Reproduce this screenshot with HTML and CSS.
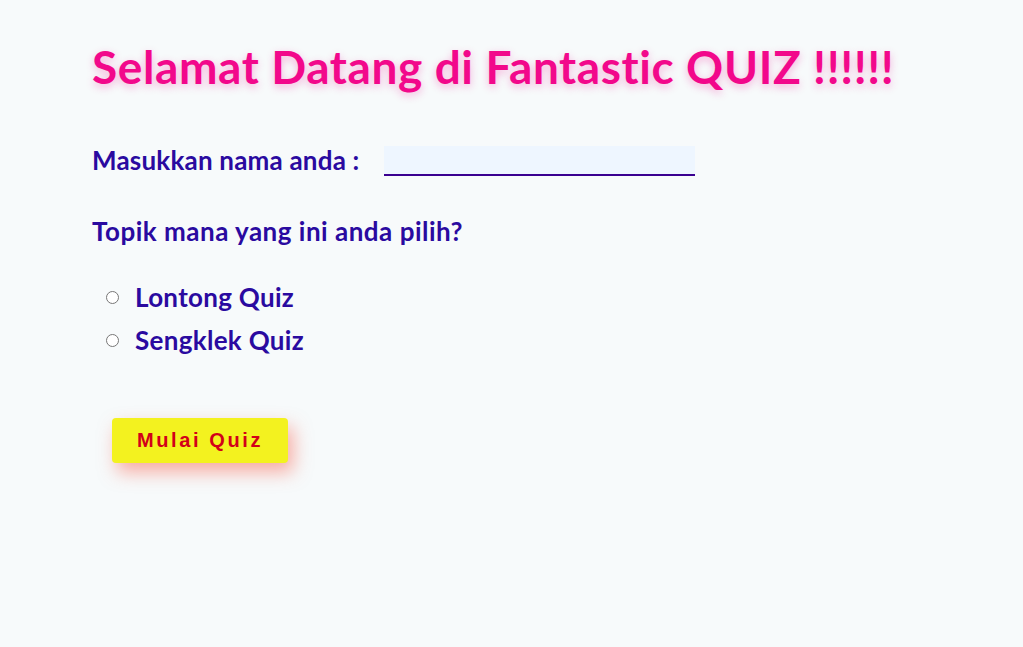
FILE: index.html
```html
<!DOCTYPE html>
<html lang="id">
<head>
<meta charset="utf-8">
<title>Fantastic QUIZ</title>
<link rel="stylesheet" href="styles.css">
</head>
<body>
<main class="page">
  <h1 class="title">Selamat Datang di Fantastic QUIZ !!!!!!</h1>
  <div class="name-row">
    <label class="label" for="nama">Masukkan nama anda :</label>
    <input class="name-input" id="nama" type="text">
  </div>
  <p class="question">Topik mana yang ini anda pilih?</p>
  <div class="options">
    <label class="option"><input type="radio" name="topik" class="radio"><span>Lontong Quiz</span></label>
    <label class="option"><input type="radio" name="topik" class="radio"><span>Sengklek Quiz</span></label>
  </div>
  <button class="start-btn" type="button">Mulai Quiz</button>
</main>
</body>
</html>
```
FILE: styles.css
```css
html, body {
  margin: 0;
  padding: 0;
  background: #f7fafb;
  min-height: 100%;
}
.page {
  padding: 40px 0 120px 92px;
  font-family: "Lato", "Open Sans", sans-serif;
}
.title {
  margin: 0;
  font-size: 46px;
  font-weight: 700;
  letter-spacing: 0.6px;
  color: #f2088b;
  text-shadow: 0 3px 8px rgba(242, 8, 139, 0.3);
  line-height: 54px;
}
.name-row {
  display: flex;
  align-items: center;
  margin-top: 51px;
}
.label {
  font-size: 26px;
  font-weight: 700;
  letter-spacing: 0.2px;
  color: #2a0aa0;
  position: relative;
  top: -1px;
}
.name-input {
  margin-left: 25px;
  width: 311px;
  height: 28px;
  box-sizing: content-box;
  border: none;
  border-bottom: 2px solid #3a0090;
  background: #eef6ff;
  padding: 0;
  outline: none;
}
.question {
  margin: 38px 0 0;
  font-size: 26px;
  font-weight: 700;
  letter-spacing: 0.5px;
  color: #2a0aa0;
}
.options {
  margin-top: 34px;
  display: flex;
  flex-direction: column;
  gap: 11px;
}
.option {
  display: flex;
  align-items: center;
  font-size: 26px;
  font-weight: 700;
  letter-spacing: 0.3px;
  color: #2a0aa0;
}
.radio {
  margin: 0 16px 0 14px;
  width: 13px;
  height: 13px;
}
.start-btn {
  margin: 62px 0 0 20px;
  width: 176px;
  height: 45px;
  border: none;
  border-radius: 4px;
  background: #f3f21f;
  color: #d20019;
  font-family: "Liberation Sans", Arial, sans-serif;
  font-weight: 700;
  font-size: 20px;
  letter-spacing: 2.6px;
  padding: 0 0 0 2px;
  text-align: left;
  text-indent: 23px;
  box-shadow: 5px 9px 18px rgba(250, 95, 75, 0.5);
}
```
